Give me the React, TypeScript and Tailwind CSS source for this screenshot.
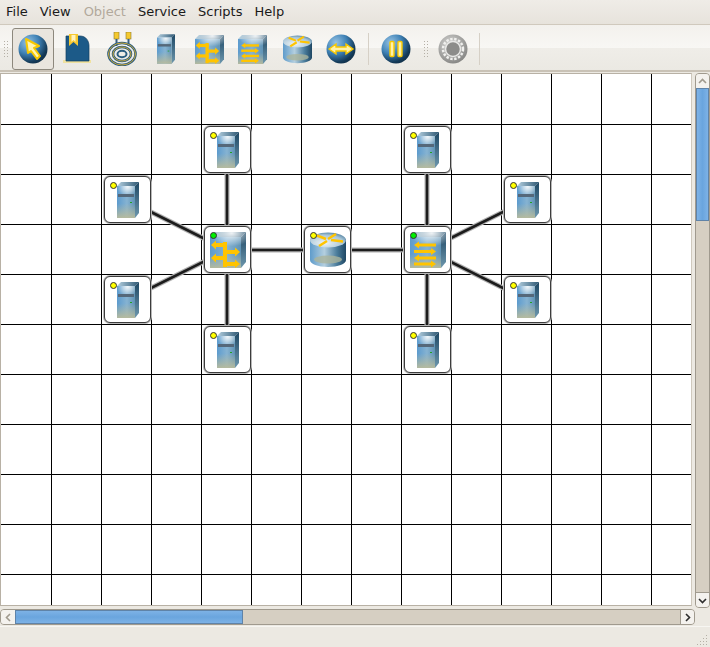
import React from "react";

const menus = ["File", "View", "Object", "Service", "Scripts", "Help"];

const nodes = [
  { x: 227, y: 150, kind: "server" },
  { x: 127, y: 200, kind: "server" },
  { x: 227, y: 250, kind: "switch" },
  { x: 127, y: 300, kind: "server" },
  { x: 227, y: 350, kind: "server" },
  { x: 327, y: 250, kind: "router" },
  { x: 427, y: 250, kind: "hub" },
  { x: 427, y: 150, kind: "server" },
  { x: 527, y: 200, kind: "server" },
  { x: 527, y: 300, kind: "server" },
  { x: 427, y: 350, kind: "server" },
];

const links = [
  [227, 150, 227, 250],
  [127, 200, 227, 250],
  [127, 300, 227, 250],
  [227, 350, 227, 250],
  [227, 250, 427, 250],
  [427, 150, 427, 250],
  [527, 200, 427, 250],
  [527, 300, 427, 250],
  [427, 350, 427, 250],
];

const hLines = [124, 174, 224, 274, 324, 374, 424, 474, 524, 574];
const vLines = [51, 101, 151, 201, 251, 301, 351, 401, 451, 501, 551, 601, 651];

function SharedDefs() {
  return (
    <svg className="absolute h-0 w-0" aria-hidden="true">
      <defs>
        <linearGradient id="front" x1="0" y1="0" x2="1" y2="0">
          <stop offset="0" stopColor="#5c9bce" />
          <stop offset="0.55" stopColor="#86b3d2" />
          <stop offset="1" stopColor="#5f93b5" />
        </linearGradient>
        <radialGradient id="glow" cx="0.6" cy="0.05" r="0.6">
          <stop offset="0" stopColor="#ffffff" stopOpacity="0.9" />
          <stop offset="1" stopColor="#ffffff" stopOpacity="0" />
        </radialGradient>
        <linearGradient id="olive" x1="0" y1="0" x2="0" y2="1">
          <stop offset="0.55" stopColor="#b8bb9c" stopOpacity="0" />
          <stop offset="1" stopColor="#b8bb9c" stopOpacity="0.95" />
        </linearGradient>
        <linearGradient id="side" x1="0" y1="0" x2="0" y2="1">
          <stop offset="0" stopColor="#1d4764" />
          <stop offset="1" stopColor="#6d97ad" />
        </linearGradient>
        <linearGradient id="top" x1="0" y1="0" x2="1" y2="0">
          <stop offset="0" stopColor="#b5d0e0" />
          <stop offset="1" stopColor="#2e5874" />
        </linearGradient>
        <linearGradient id="cyl" x1="0" y1="0" x2="1" y2="0">
          <stop offset="0" stopColor="#5f9ccb" />
          <stop offset="0.4" stopColor="#b4cfdf" />
          <stop offset="0.75" stopColor="#4a7c9b" />
          <stop offset="1" stopColor="#1f4763" />
        </linearGradient>
        <radialGradient id="cylTop" cx="0.4" cy="0.7" r="0.75">
          <stop offset="0" stopColor="#f0f4f5" />
          <stop offset="0.7" stopColor="#a9c6d8" />
          <stop offset="1" stopColor="#4f7f9e" />
        </radialGradient>
        <radialGradient id="globe" cx="0.32" cy="0.28" r="0.85">
          <stop offset="0" stopColor="#96c3e4" />
          <stop offset="0.45" stopColor="#3f82b6" />
          <stop offset="0.8" stopColor="#143a58" />
          <stop offset="1" stopColor="#0f2a40" />
        </radialGradient>
        <radialGradient id="gear" cx="0.4" cy="0.35" r="0.8">
          <stop offset="0" stopColor="#d8d8d6" />
          <stop offset="1" stopColor="#777775" />
        </radialGradient>
      </defs>
    </svg>
  );
}

function ServerIcon({ w = 22, h = 36 }: { w?: number; h?: number }) {
  return (
    <svg width={w} height={h} viewBox="0 0 22 36">
      <polygon points="0,4 4,0 22,0 18,4" fill="url(#top)" />
      <polygon points="18,4 22,0 22,31 18,36" fill="url(#side)" />
      <rect x="0" y="4" width="18" height="32" fill="url(#front)" />
      <rect x="0" y="4" width="18" height="32" fill="url(#olive)" />
      <rect x="0" y="4" width="18" height="16" fill="url(#glow)" />
      <rect x="1" y="12" width="16" height="3" fill="#55687a" />
      <rect x="13" y="20" width="2" height="1" fill="#22a022" />
    </svg>
  );
}

function CubeBody() {
  return (
    <>
      <polygon points="0,5 5,0 36,0 31,5" fill="url(#top)" />
      <polygon points="31,5 36,0 36,30 31,36" fill="url(#side)" />
      <rect x="0" y="5" width="31" height="31" fill="url(#front)" />
      <rect x="0" y="5" width="31" height="31" fill="url(#olive)" />
      <rect x="0" y="0" width="36" height="22" fill="url(#glow)" />
    </>
  );
}

function SwitchIcon({ size = 36 }: { size?: number }) {
  return (
    <svg width={size} height={size} viewBox="0 0 36 36">
      <CubeBody />
      <g fill="#ffc400">
        <rect x="13" y="10" width="4" height="25" />
        <rect x="5" y="11" width="12" height="4" />
        <polygon points="1,13 6,8.5 6,17.5" />
        <rect x="5" y="24" width="12" height="4" />
        <polygon points="1,26 6,21.5 6,30.5" />
        <rect x="14" y="18" width="12" height="4" />
        <polygon points="30,20 25,15.5 25,24.5" />
        <rect x="14" y="30" width="12" height="4" />
        <polygon points="30,32 25,27.5 25,36" />
      </g>
    </svg>
  );
}

function HubIcon({ size = 36 }: { size?: number }) {
  return (
    <svg width={size} height={size} viewBox="0 0 36 36">
      <CubeBody />
      <g fill="#ffc400">
        <rect x="8" y="11.5" width="18" height="3" />
        <polygon points="4,13 9,9.5 9,16.5" />
        <rect x="4" y="18" width="18" height="3" />
        <polygon points="26,19.5 21,16 21,23" />
        <rect x="8" y="24.5" width="18" height="3" />
        <polygon points="4,26 9,22.5 9,29.5" />
        <rect x="4" y="30.5" width="18" height="3" />
        <polygon points="26,32 21,28.5 21,35.5" />
      </g>
    </svg>
  );
}

function RouterIcon({ size = 36 }: { size?: number }) {
  return (
    <svg width={size} height={size} viewBox="0 0 36 36">
      <path d="M0 7 V28 C0 32 8 35 18 35 C28 35 36 32 36 28 V7 Z" fill="url(#cyl)" />
      <ellipse cx="18" cy="27.5" rx="14" ry="4" fill="#aab49c" opacity="0.8" />
      <ellipse cx="18" cy="8" rx="18" ry="7.5" fill="url(#cylTop)" />
      <g fill="none" stroke="#ffc400" strokeWidth="2.6">
        <path d="M18 7 L26 2" />
        <path d="M21 8 L33 9.5" />
        <path d="M16 7 L7 3.5" />
        <path d="M17 9 L9 14" />
      </g>
    </svg>
  );
}

function Globe({ children, gray }: { children: React.ReactNode; gray?: boolean }) {
  return (
    <svg width="30" height="30" viewBox="0 0 30 30">
      <circle cx="15" cy="15" r="14.5" fill={gray ? "url(#gear)" : "url(#globe)"} />
      {children}
    </svg>
  );
}

function BookIcon() {
  return (
    <svg width="30" height="30" viewBox="0 0 30 30">
      <path d="M0 26 H28 V29 H0 Z" fill="#f0e2a0" />
      <path d="M3 2 H17 C23 2 26 7 26 12 V27 H3 Z" fill="#1c5a88" stroke="#123f60" strokeWidth="0.7" />
      <polygon points="6,0 15,0 15,12 10.5,8 6,12" fill="#f6c930" />
      <polygon points="8.5,1 12.5,1 12.5,8 10.5,6 8.5,8" fill="#fff3c0" />
    </svg>
  );
}

function CableIcon() {
  return (
    <svg width="30" height="34" viewBox="0 0 30 34">
      <rect x="7" y="0" width="5" height="7" fill="#f5c92e" stroke="#8a7a30" strokeWidth="0.6" />
      <rect x="19" y="0" width="5" height="7" fill="#f5c92e" stroke="#8a7a30" strokeWidth="0.6" />
      <path d="M9.5 7 V14 M21.5 7 V14" stroke="#365f80" strokeWidth="2" />
      <g fill="none">
        <ellipse cx="15" cy="22" rx="13.5" ry="11" stroke="#2b5d80" strokeWidth="2.6" />
        <ellipse cx="15" cy="22" rx="13.5" ry="11" stroke="#c9a83a" strokeWidth="1" />
        <ellipse cx="15" cy="22" rx="9" ry="7" stroke="#2b5d80" strokeWidth="2.6" />
        <ellipse cx="15" cy="22" rx="9" ry="7" stroke="#c9a83a" strokeWidth="1" />
        <ellipse cx="15" cy="22" rx="4.5" ry="3.2" stroke="#2b5d80" strokeWidth="2" />
      </g>
    </svg>
  );
}

function ToolIcon({ children, className }: { children: React.ReactNode; className: string }) {
  return <div className={`flex h-[42px] items-center justify-center ${className}`}>{children}</div>;
}

function Grip() {
  return (
    <div className="grid grid-cols-2 gap-x-[2px] gap-y-[2px]">
      {Array.from({ length: 12 }).map((_, i) => (
        <span key={i} className="h-[1px] w-[1px] bg-[#b5b0a6]" />
      ))}
    </div>
  );
}

function Separator({ className }: { className: string }) {
  return <div className={`h-[32px] w-[1px] bg-[#d6d0c6] ${className}`} />;
}

function Toolbar() {
  return (
    <div className="flex h-[47px] items-center border-b-2 border-[#c9c2b6] bg-[linear-gradient(#f3f1ed_0%,#f8f7f4_50%,#efede8_52%,#ebe9e3_100%)] pl-[4px] pt-[3px]">
      <Grip />
      <div className="ml-[4px] flex h-[42px] w-[42px] items-center justify-center rounded-[3px] border border-[#8d887d] bg-[#e9e5de]">
        <Globe>
          <polygon
            points="8,5 21,12 16,14 22,22 19,25 13,17 10,19"
            fill="#fff5b0"
            stroke="#f6c800"
            strokeWidth="2"
            strokeLinejoin="round"
          />
        </Globe>
      </div>
      <ToolIcon className="ml-[9px] w-[30px]">
        <BookIcon />
      </ToolIcon>
      <ToolIcon className="ml-[14px] w-[30px]">
        <CableIcon />
      </ToolIcon>
      <ToolIcon className="ml-[14px] w-[30px]">
        <ServerIcon w={18} h={30} />
      </ToolIcon>
      <ToolIcon className="ml-[13px] w-[30px]">
        <SwitchIcon size={29} />
      </ToolIcon>
      <ToolIcon className="ml-[13px] w-[30px]">
        <HubIcon size={29} />
      </ToolIcon>
      <ToolIcon className="ml-[15px] w-[30px]">
        <RouterIcon size={29} />
      </ToolIcon>
      <ToolIcon className="ml-[14px] w-[30px]">
        <Globe>
          <path d="M3 15 L10 10 V13 H20 V10 L27 15 L20 20 V17 H10 V20 Z" fill="#fff2a8" stroke="#f8c800" strokeWidth="1.4" />
        </Globe>
      </ToolIcon>
      <Separator className="ml-[12px]" />
      <ToolIcon className="ml-[12px] w-[30px]">
        <Globe>
          <rect x="9" y="7.5" width="4" height="15" rx="1" fill="#fff2a8" stroke="#f8c800" strokeWidth="1.4" />
          <rect x="17" y="7.5" width="4" height="15" rx="1" fill="#fff2a8" stroke="#f8c800" strokeWidth="1.4" />
        </Globe>
      </ToolIcon>
      <div className="ml-[13px]">
        <Grip />
      </div>
      <ToolIcon className="ml-[10px] w-[30px]">
        <Globe gray>
          <circle cx="15" cy="15" r="10" fill="none" stroke="#f0f0ee" strokeWidth="2.5" strokeDasharray="2.4 1.6" />
          <circle cx="15" cy="15" r="7.5" fill="#8c8c8a" stroke="#e8e8e6" strokeWidth="1.5" />
        </Globe>
      </ToolIcon>
      <Separator className="ml-[11px]" />
    </div>
  );
}

function Node({ x, y, kind }: { x: number; y: number; kind: string }) {
  return (
    <div
      className="absolute flex h-[47px] w-[47px] items-center justify-center rounded-[6px] border border-[#3c3c3c] bg-white shadow-[0_0_0_1px_#b8b8b8]"
      style={{ left: x - 24, top: y - 74 - 24 }}
    >
      <div className="ml-[1px] mt-[1px] flex">
        {kind === "server" && <ServerIcon />}
        {kind === "switch" && <SwitchIcon />}
        {kind === "hub" && <HubIcon />}
        {kind === "router" && <RouterIcon />}
      </div>
      <span
        className={`absolute left-[5px] top-[5px] h-[7px] w-[7px] rounded-full border border-[#333] ${
          kind === "switch" || kind === "hub" ? "bg-[#00f000]" : "bg-[#ffff00]"
        }`}
      />
    </div>
  );
}

function Canvas() {
  return (
    <div className="relative h-[531px] w-[690px] overflow-hidden bg-white">
      <svg className="absolute left-0 top-0" width="690" height="531" viewBox="1 74 690 531">
        {hLines.map((y) => (
          <line key={y} x1="1" x2="691" y1={y + 0.5} y2={y + 0.5} stroke="#000" />
        ))}
        {vLines.map((x) => (
          <line key={x} x1={x + 0.5} x2={x + 0.5} y1="74" y2="605" stroke="#000" />
        ))}
        {links.map((l, i) => (
          <line key={`o${i}`} x1={l[0]} y1={l[1]} x2={l[2]} y2={l[3]} stroke="#b0b0b0" strokeWidth="5" />
        ))}
        {links.map((l, i) => (
          <line key={`i${i}`} x1={l[0]} y1={l[1]} x2={l[2]} y2={l[3]} stroke="#1c1c1c" strokeWidth="2.6" />
        ))}
      </svg>
      {nodes.map((n, i) => (
        <Node key={i} x={n.x} y={n.y} kind={n.kind} />
      ))}
    </div>
  );
}

function Arrow({ d, color = "#2e2e2e" }: { d: string; color?: string }) {
  return (
    <svg width="9" height="9" viewBox="0 0 9 9">
      <path d={d} fill="none" stroke={color} strokeWidth="1.6" />
    </svg>
  );
}

export default function App() {
  return (
    <div className="flex h-[647px] w-[710px] flex-col overflow-hidden bg-[#ece9e2] font-['DejaVu_Sans',sans-serif] text-[13px] text-[#1a1a1a]">
      <SharedDefs />

      {/* menu */}
      <div className="flex h-[25px] items-center border-b border-[#d0c9bd] bg-[linear-gradient(#efece7,#e7e3dc)]">
        {menus.map((m) => (
          <span key={m} className={`px-[6px] ${m === "Object" ? "ml-px text-[#b2a99c]" : ""}`}>
            {m}
          </span>
        ))}
      </div>

      <Toolbar />

      {/* canvas + vertical scrollbar */}
      <div className="mt-px flex h-[533px] bg-[#ece9e2]">
        <div className="h-[533px] w-[692px] border border-[#b8b1a5] border-r-[#cfc9bd]">
          <Canvas />
        </div>
        <div className="ml-[3px] flex h-[535px] w-[15px] flex-col overflow-hidden rounded-[4px] border border-[#a09a8e] bg-[#d6cfc2]">
          <div className="flex h-[14px] items-center justify-center bg-[#f4f2ee]">
            <Arrow d="M1 6 L4.5 2.5 L8 6" color="#a09a8e" />
          </div>
          <div className="h-[133px] border border-[#5f83a8] bg-[linear-gradient(90deg,#7db2e6,#6aa5de_50%,#7db2e6)]" />
          <div className="flex-1" />
          <div className="flex h-[15px] items-center justify-center border-t border-[#a09a8e] bg-[#f4f2ee]">
            <Arrow d="M1 3 L4.5 6.5 L8 3" />
          </div>
        </div>
      </div>

      {/* horizontal scrollbar */}
      <div className="mt-[3px] flex h-[16px] w-[695px] overflow-hidden rounded-[4px] border border-[#a09a8e] bg-[#d6cfc2]">
        <div className="flex w-[14px] items-center justify-center bg-[#f4f2ee]">
          <Arrow d="M6 1 L2.5 4.5 L6 8" color="#a09a8e" />
        </div>
        <div className="w-[228px] border border-[#5f83a8] bg-[linear-gradient(#7db2e6,#6aa5de_50%,#7db2e6)]" />
        <div className="flex-1" />
        <div className="flex w-[14px] items-center justify-center border-l border-[#a09a8e] bg-[#f4f2ee]">
          <Arrow d="M3 1 L6.5 4.5 L3 8" />
        </div>
      </div>

      {/* status bar */}
      <div className="relative mt-px flex-1 border-t border-[#f7f6f2] bg-[#ece9e2]">
        <svg className="absolute bottom-[2px] right-[2px]" width="12" height="12" viewBox="0 0 12 12">
          {[
            [10, 2],
            [7, 5],
            [10, 5],
            [4, 8],
            [7, 8],
            [10, 8],
            [1, 11],
            [4, 11],
            [7, 11],
            [10, 11],
          ].map(([x, y]) => (
            <rect key={`${x}-${y}`} x={x} y={y} width="1" height="1" fill="#b5b0a6" />
          ))}
        </svg>
      </div>
    </div>
  );
}
